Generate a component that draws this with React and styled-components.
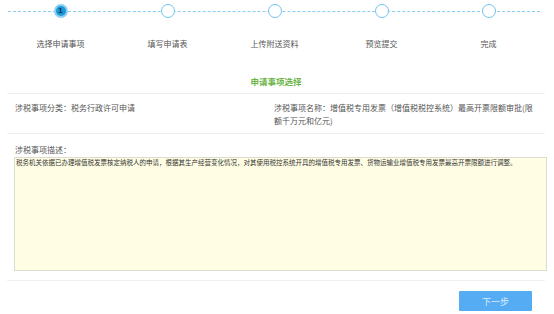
import React from "react";
import styled, { createGlobalStyle } from "styled-components";

const Global = createGlobalStyle`
  html, body { margin: 0; padding: 0; background: #fff; }
  body { font-family: "Microsoft YaHei", "Noto Sans CJK SC", "Noto Sans", sans-serif; color: #555; }
`;

const Page = styled.div`
  width: 554px;
  height: 314px;
  overflow: hidden;
  box-sizing: border-box;
`;

const Steps = styled.div`
  position: relative;
  display: grid;
  grid-template-columns: repeat(5, 1fr);
  margin: 0 12px 0 7px;
  padding-top: 4px;
`;

const Track = styled.div`
  position: absolute;
  left: 1px;
  right: 2px;
  top: 11px;
  border-top: 1px dashed #8ccdf0;
`;

const Step = styled.div`
  display: flex;
  flex-direction: column;
  align-items: center;
  position: relative;
`;

const Dot = styled.div`
  width: 14px;
  height: 14px;
  box-sizing: border-box;
  border-radius: 50%;
  border: ${(p) => (p.$active ? "2px solid #8fd0f2" : "1.5px solid #74c3ee")};
  background: ${(p) => (p.$active ? "#1b98d8" : "#fff")};
  text-align: center;
  font-size: 8px;
  font-weight: bold;
  line-height: 10px;
  color: #0b2f55;
  font-family: "Liberation Sans", Arial, sans-serif;
`;

const StepLabel = styled.div`
  margin-top: 20px;
  font-size: 8px;
  line-height: 12px;
  color: #555;
  white-space: nowrap;
`;

const Section = styled.div`
  margin: 0 7px;
`;

const Title = styled.div`
  margin-top: 25px;
  padding-bottom: 6px;
  text-align: center;
  font-size: 8.5px;
  line-height: 12px;
  font-weight: bold;
  color: #6ab446;
  border-bottom: 1px solid #f0f0f0;
  margin-right: 2px;
`;

const InfoRow = styled.div`
  display: grid;
  grid-template-columns: 259px 262px;
  padding: 7px 0 6px 8px;
  border-bottom: 1px solid #f0f0f0;
  margin-right: 2px;
  font-size: 8px;
  line-height: 13px;
  color: #555;
`;

const Cell = styled.div``;

const DescLabel = styled.div`
  margin-top: 10px;
  padding-left: 8px;
  font-size: 8px;
  line-height: 12px;
  color: #555;
`;

const DescBox = styled.div`
  margin: 1px 0 0 7px;
  height: 114px;
  box-sizing: border-box;
  background: #fffee4;
  border: 1px solid #dcdccf;
  padding: 0 1px;
  font-size: 6.5px;
  line-height: 9px;
  color: #333;
  white-space: nowrap;
`;

const Footer = styled.div`
  margin-top: 9px;
  margin-right: 2px;
  border-top: 1px solid #f0f0f0;
  display: flex;
  justify-content: flex-end;
  padding: 10px 13px 0 0;
`;

const NextButton = styled.button`
  width: 73px;
  height: 20px;
  border: none;
  border-radius: 1px;
  background: #55acf3;
  color: #d6ebff;
  font-family: inherit;
  font-size: 9px;
  padding: 0;
  cursor: pointer;
`;

const steps = ["选择申请事项", "填写申请表", "上传附送资料", "预览提交", "完成"];

export default function App() {
  return (
    <Page>
      <Global />
      <Steps>
        <Track />
        {steps.map((s, i) => (
          <Step key={s}>
            <Dot $active={i === 0}>{i === 0 ? "1" : ""}</Dot>
            <StepLabel>{s}</StepLabel>
          </Step>
        ))}
      </Steps>
      <Section>
        <Title>申请事项选择</Title>
        <InfoRow>
          <Cell>涉税事项分类：税务行政许可申请</Cell>
          <Cell>涉税事项名称：增值税专用发票（增值税税控系统）最高开票限额审批(限额千万元和亿元)</Cell>
        </InfoRow>
        <DescLabel>涉税事项描述：</DescLabel>
        <DescBox>
          税务机关依据已办理增值税发票核定纳税人的申请，根据其生产经营变化情况，对其使用税控系统开具的增值税专用发票、货物运输业增值税专用发票最高开票限额进行调整。
        </DescBox>
        <Footer>
          <NextButton>下一步</NextButton>
        </Footer>
      </Section>
    </Page>
  );
}
